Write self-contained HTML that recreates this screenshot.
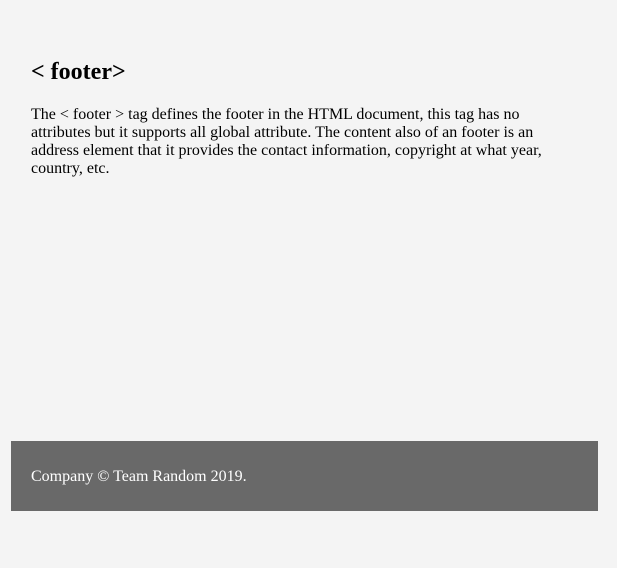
<!DOCTYPE html>
<html><head><style>
html,body{margin:0;padding:0;background:#f4f4f4;width:617px;height:568px;overflow:hidden;font-family:"Liberation Serif",serif;}
h1{position:absolute;left:31px;top:58px;margin:0;font-size:24px;line-height:28px;font-weight:bold;color:#000;}
p{position:absolute;left:31px;top:106px;width:525px;margin:0;font-size:16px;line-height:18px;color:#000;}
.f{position:absolute;left:11px;top:441px;width:587px;height:70px;background:#696969;}
.f span{position:absolute;left:20px;top:27px;font-size:16px;line-height:18px;color:#fff;}
</style></head><body>
<h1>&lt; footer&gt;</h1>
<p>The &lt; footer &gt; tag defines the footer in the HTML document, this tag has no attributes but it supports all global attribute. The content also of an footer is an address element that it provides the contact information, copyright at what year, country, etc.</p>
<div class="f"><span>Company © Team Random 2019.</span></div>
</body></html>
